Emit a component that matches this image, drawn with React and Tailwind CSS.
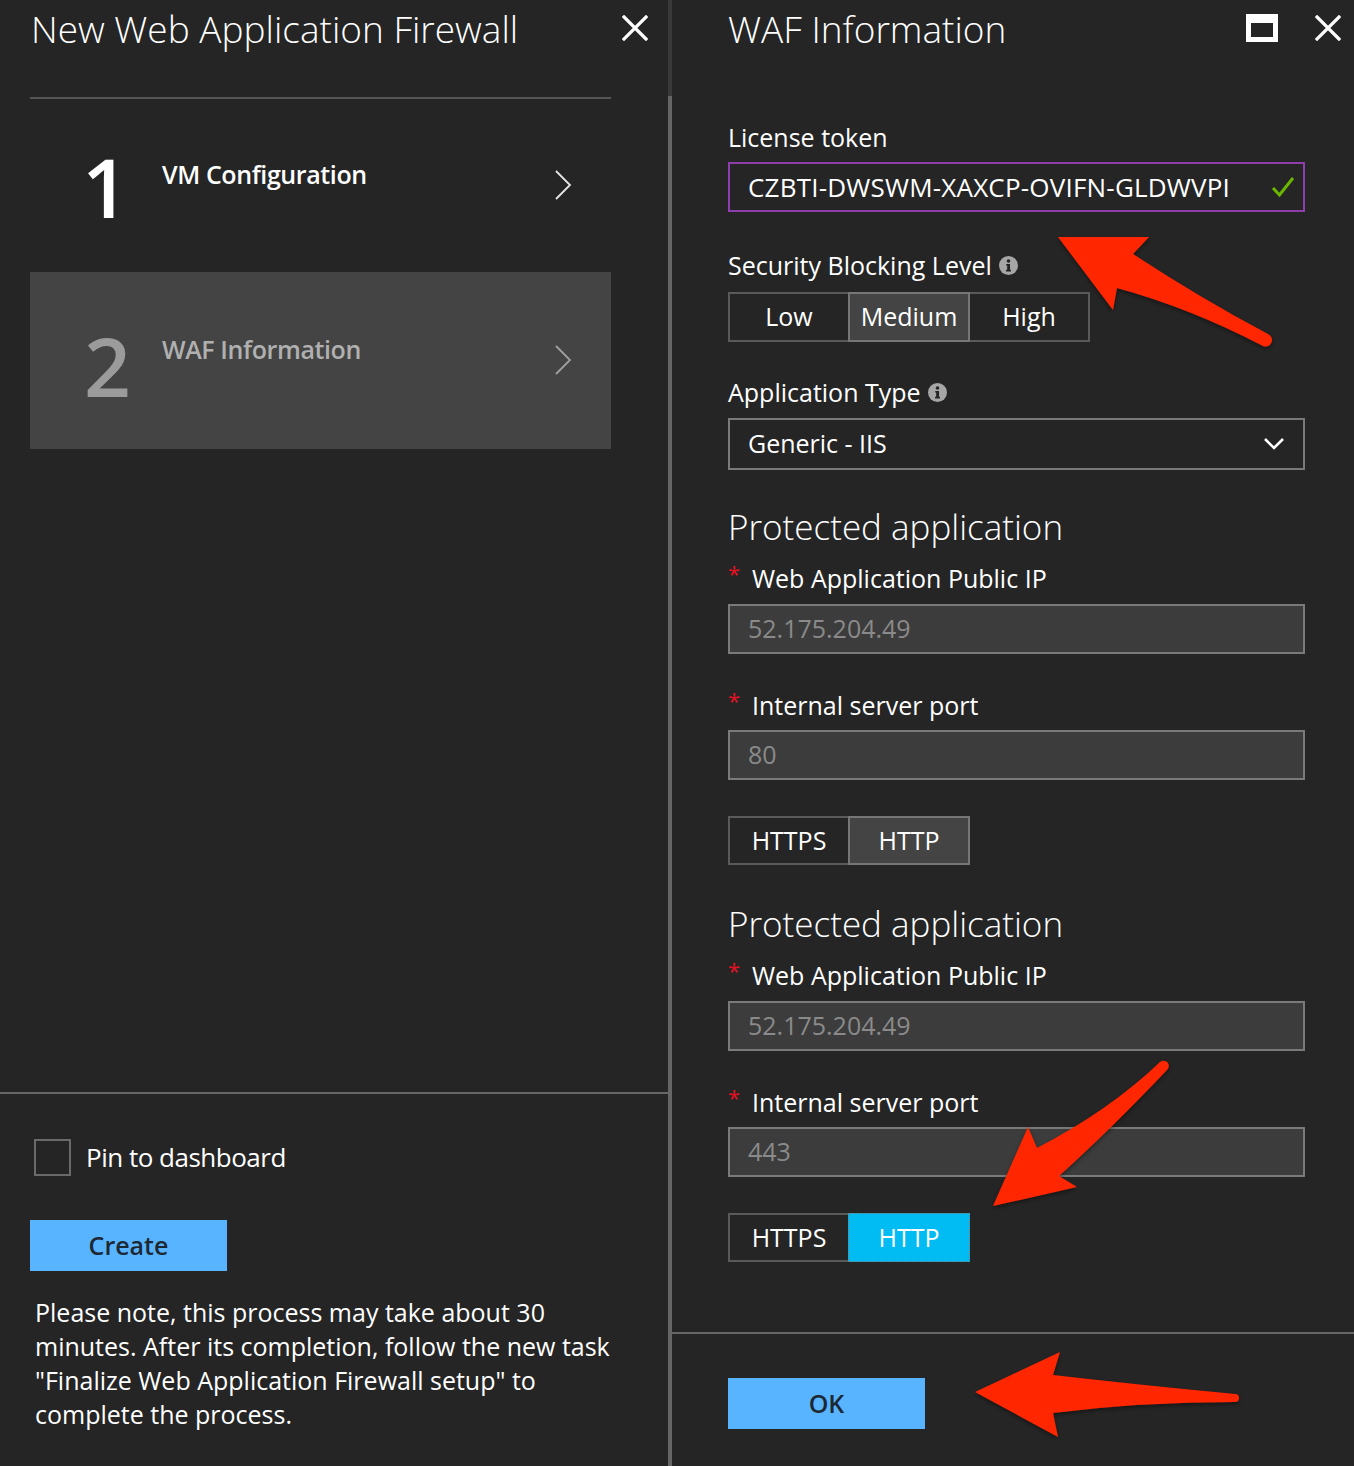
import React from "react";

const font = { fontFamily: '"Open Sans", "Noto Sans", sans-serif' };

const CloseIcon = () => (
  <svg width="26" height="26" viewBox="0 0 26 26">
    <path d="M2 2 L24 24 M24 2 L2 24" stroke="#fff" strokeWidth="3.2" strokeLinecap="square" />
  </svg>
);

const Chevron = ({ color }) => (
  <svg width="18" height="32" viewBox="0 0 18 32">
    <path d="M2 2 L16 16 L2 30" stroke={color} strokeWidth="1.8" fill="none" />
  </svg>
);

const InfoIcon = () => (
  <svg width="19" height="19" viewBox="0 0 20 20" className="ml-[7px] inline-block">
    <circle cx="10" cy="10" r="10" fill="#a6a6a6" />
    <circle cx="10" cy="5.2" r="1.9" fill="#252525" />
    <path d="M7.6 8.3 H11.6 V14.6 H12.6 V16.4 H7.4 V14.6 H8.6 V10.1 H7.6 Z" fill="#252525" />
  </svg>
);

const Label = ({ children, required, info }) => (
  <div className="flex items-center h-[30px] text-[25px] leading-[30px] text-white">
    {required && <span className="text-[#e81123] text-[22px] w-[24px] -mt-[10px]">*</span>}
    <span>{children}</span>
    {info && <InfoIcon />}
  </div>
);

const Toggle = ({ items, active, accent, h = "h-[49px]" }) => (
  <div className={`flex ${h}`}>
    {items.map((t, i) => {
      const on = i === active;
      let cls = "border-[2px] border-[#5a5a5a] bg-transparent";
      if (on && accent) cls = "border-[1px] border-dotted border-[#7a7a7a] bg-[#00bcf2]";
      else if (on) cls = "border-[2px] border-[#767676] bg-[#444444] z-10";
      return (
        <div
          key={t}
          className={`relative flex items-center justify-center w-[122px] text-[25px] text-white ${i > 0 ? "-ml-[2px]" : ""} ${cls}`}
        >
          {t}
        </div>
      );
    })}
  </div>
);

const DisabledInput = ({ value }) => (
  <div className="h-[50px] w-[577px] border-[2px] border-[#7a7a7a] bg-[#3c3c3c] flex items-center pl-[18px] text-[25px] text-[#8a8a8a]">
    {value}
  </div>
);

const Protected = ({ port, accent }) => (
  <div className="flex flex-col">
    <div className="h-[44px] leading-[44px] text-[35px] text-white font-[350]">Protected application</div>
    <div className="mt-[14px]">
      <Label required>Web Application Public IP</Label>
    </div>
    <div className="mt-[11px]">
      <DisabledInput value="52.175.204.49" />
    </div>
    <div className="mt-[36px]">
      <Label required>Internal server port</Label>
    </div>
    <div className="mt-[10px]">
      <DisabledInput value={port} />
    </div>
    <div className="mt-[36px]">
      <Toggle items={["HTTPS", "HTTP"]} active={1} accent={accent} />
    </div>
  </div>
);

export default function App() {
  return (
    <div className="relative flex w-[1354px] h-[1466px] bg-[#252525] overflow-hidden" style={font}>
      {/* left blade */}
      <div className="w-[668px] flex flex-col">
        <div className="h-[97px] flex items-start justify-between pl-[31px] pr-[20px]">
          <div className="mt-[5px] text-[37px] leading-[48px] text-white font-[350]">
            New Web Application Firewall
          </div>
          <div className="mt-[15px]">
            <CloseIcon />
          </div>
        </div>
        <div className="ml-[30px] w-[581px] border-t-[2px] border-[#555]" />
        <div className="ml-[30px] w-[581px] h-[173px] flex relative">
          <div className="w-[132px] pl-[52px] pt-[42px] text-[82px] leading-[90px] text-white font-semibold">1</div>
          <div className="pt-[58px] text-[25px] leading-[34px] text-white font-semibold tracking-[-0.4px]">VM Configuration</div>
          <div className="absolute left-[524px] top-[70px]">
            <Chevron color="#e6e6e6" />
          </div>
        </div>
        <div className="ml-[30px] w-[581px] h-[177px] bg-[#444444] flex relative">
          <div className="w-[132px] pl-[54px] pt-[48px] text-[82px] leading-[90px] text-[#9b9b9b] font-semibold">2</div>
          <div className="pt-[60px] text-[25px] leading-[34px] text-[#b0b0b0] font-semibold tracking-[-0.4px]">WAF Information</div>
          <div className="absolute left-[524px] top-[72px]">
            <Chevron color="#a0a0a0" />
          </div>
        </div>
        <div className="flex-1" />
        <div className="h-[374px] border-t-[2px] border-[#666] flex flex-col pl-[30px]">
          <div className="mt-[44px] flex items-center">
            <div className="ml-[4px] w-[37px] h-[37px] border-[2px] border-[#6a6a6a]" />
            <div className="ml-[15px] text-[26px] text-white tracking-[-0.5px]">Pin to dashboard</div>
          </div>
          <div className="mt-[43px] w-[197px] h-[51px] bg-[#59b4ff] flex items-center justify-center text-[25px] font-semibold text-[#1c2833]">
            Create
          </div>
          <div className="mt-[24px] ml-[5px] text-[25px] leading-[34px] text-white">
            Please note, this process may take about 30
            <br />
            minutes. After its completion, follow the new task
            <br />
            "Finalize Web Application Firewall setup" to
            <br />
            complete the process.
          </div>
        </div>
      </div>

      {/* divider */}
      <div className="w-[4px] flex flex-col">
        <div className="h-[96px] bg-[#3a3a3a]" />
        <div className="flex-1 bg-[#666666]" />
      </div>

      {/* right blade */}
      <div className="flex-1 flex flex-col">
        <div className="h-[97px] flex items-start pl-[56px] pr-[13px]">
          <div className="mt-[5px] text-[37px] leading-[48px] text-white font-[350]">WAF Information</div>
          <div className="flex-1" />
          <div className="mt-[14px] w-[32px] h-[28px] border-white border-x-[5px] border-b-[5px] border-t-[9px]" />
          <div className="mt-[15px] ml-[37px]">
            <CloseIcon />
          </div>
        </div>
        <div className="flex-1 flex flex-col pl-[56px]">
          <div className="mt-[25px]">
            <Label>License token</Label>
          </div>
          <div className="mt-[10px] h-[50px] w-[577px] border-[2px] border-[#8e3fad] flex items-center pl-[18px] pr-[8px] text-[26px] text-white tracking-[0.2px]">
            <span className="flex-1">CZBTI-DWSWM-XAXCP-OVIFN-GLDWVPI</span>
            <svg width="24" height="22" viewBox="0 0 24 22">
              <path d="M2 12 L8.5 19 L22 2" stroke="#6bb700" strokeWidth="3" fill="none" />
            </svg>
          </div>
          <div className="mt-[38px]">
            <Label info>Security Blocking Level</Label>
          </div>
          <div className="mt-[12px]">
            <Toggle items={["Low", "Medium", "High"]} active={1} h="h-[50px]" />
          </div>
          <div className="mt-[35px]">
            <Label info>Application Type</Label>
          </div>
          <div className="mt-[11px] h-[52px] w-[577px] border-[2px] border-[#7a7a7a] flex items-center pl-[18px] pr-[18px] text-[25px] text-white">
            <span className="flex-1">Generic - IIS</span>
            <svg width="22" height="14" viewBox="0 0 22 14">
              <path d="M2 2 L11 11 L20 2" stroke="#fff" strokeWidth="2.6" fill="none" />
            </svg>
          </div>
          <div className="mt-[35px]">
            <Protected port="80" />
          </div>
          <div className="mt-[37px]">
            <Protected port="443" accent />
          </div>
        </div>
        <div className="h-[134px] border-t-[2px] border-[#666] pl-[56px]">
          <div className="mt-[44px] w-[197px] h-[51px] bg-[#59b4ff] flex items-center justify-center text-[25px] font-semibold text-[#1c2833]">
            OK
          </div>
        </div>
      </div>

      {/* red annotation arrows */}
      <svg className="absolute inset-0 pointer-events-none" width="1354" height="1466" viewBox="0 0 1354 1466">
        <defs>
          <filter id="sh" x="-10%" y="-10%" width="120%" height="130%">
            <feDropShadow dx="0" dy="2" stdDeviation="2" floodColor="#000" floodOpacity="0.45" />
          </filter>
        </defs>
        <g fill="#ff2600" filter="url(#sh)">
          <path d="M1058,237 L1149,237 L1133,254 Q1200,298 1268,334 A5,5 0 0 1 1263,346 Q1190,308 1117,288 L1113,310 Z" />
          <path d="M993,1206 L1028,1127 L1037,1148 Q1110,1110 1160,1062 A5,5 0 0 1 1167,1070 Q1110,1130 1059,1176 L1077,1187 Z" />
          <path d="M975,1392 L1060,1352 L1053,1375 Q1140,1385 1235,1394 A4,4 0 0 1 1235,1402 Q1140,1402 1053,1413 L1058,1437 Z" />
        </g>
      </svg>
    </div>
  );
}
